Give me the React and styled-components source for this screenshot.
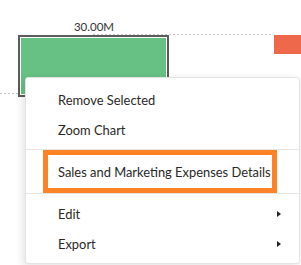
import React from 'react';
import styled, { createGlobalStyle } from 'styled-components';

const GlobalStyle = createGlobalStyle`
  html, body {
    margin: 0;
    padding: 0;
    background: #ffffff;
  }
  body {
    font-family: Lato, "Noto Sans", "Liberation Sans", sans-serif;
  }
`;

const Stage = styled.div`
  position: relative;
  width: 301px;
  height: 265px;
  overflow: hidden;
  background: #fff;
`;

const Chart = styled.svg`
  display: block;
`;

const Menu = styled.div`
  position: absolute;
  left: 25px;
  top: 77px;
  width: 275px;
  height: 187px;
  box-sizing: border-box;
  background: #fff;
  border: 1px solid #e3e3e3;
  border-radius: 3px;
  box-shadow: -2px 2px 8px rgba(0, 0, 0, 0.12);
  display: flex;
  flex-direction: column;
`;

const Group = styled.div`
  display: flex;
  flex-direction: column;
  padding: ${(p) => p.$pad || '0'};
  border-bottom: ${(p) => (p.$divider ? '1px solid #e4e4e4' : 'none')};
`;

const Item = styled.div`
  height: 30px;
  display: flex;
  align-items: center;
  justify-content: space-between;
  padding: 0 18px 0 32px;
  font-size: 12.9px;
  color: #2a2927;
  white-space: nowrap;
`;

const Highlight = styled.div`
  margin: 0 22px 0 17px;
  height: 43px;
  box-sizing: border-box;
  border: 5px solid #fd8326;
  display: flex;
  align-items: center;
  padding-left: 10px;
  font-size: 12.9px;
  color: #2a2927;
  white-space: nowrap;
`;

const Caret = styled.span`
  width: 0;
  height: 0;
  border-top: 3.5px solid transparent;
  border-bottom: 3.5px solid transparent;
  border-left: 4px solid #222;
`;

export default function App() {
  return (
    <Stage>
      <GlobalStyle />
      <Chart width="301" height="265" viewBox="0 0 301 265">
        <line x1="93" y1="34.5" x2="273" y2="34.5" stroke="#c4c4c4" strokeDasharray="2 2" />
        <line x1="0" y1="93.5" x2="300" y2="93.5" stroke="#c4c4c4" strokeDasharray="2 2" />
        <text x="94" y="31" textAnchor="middle" fontFamily="Lato, 'Noto Sans', sans-serif" fontSize="11.5" fill="#333">
          30.00M
        </text>
        <rect x="19" y="36" width="149" height="60" fill="#fff" stroke="#5c5c5c" strokeWidth="2" />
        <rect x="21" y="38" width="145" height="56" fill="#67c185" />
        <rect x="274" y="35" width="30" height="19" fill="#ee684b" />
      </Chart>
      <Menu>
        <Group $pad="7px 0 4px" $divider>
          <Item>Remove Selected</Item>
          <Item>Zoom Chart</Item>
        </Group>
        <Group $divider>
          <Highlight>Sales and Marketing Expenses Details</Highlight>
        </Group>
        <Group $pad="5px 0 0">
          <Item>
            Edit
            <Caret />
          </Item>
          <Item>
            Export
            <Caret />
          </Item>
        </Group>
      </Menu>
    </Stage>
  );
}
